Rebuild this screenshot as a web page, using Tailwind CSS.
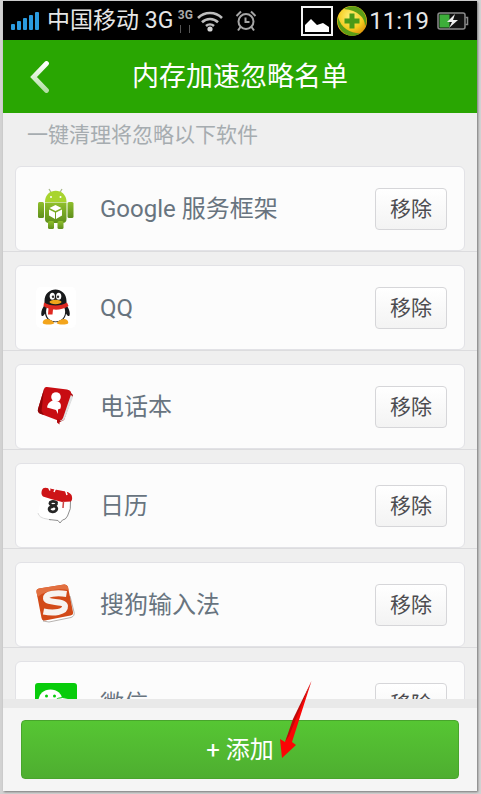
<!doctype html>
<html lang="zh-CN">
<head>
	<title>内存加速忽略名单</title>
	<meta charset="UTF-8">
	<meta content="width=device-width, initial-scale=1.0" name="viewport">
	<script src="https://cdn.jsdelivr.net/npm/@tailwindcss/browser@4"></script>
</head>

<body class="bg-[#d2d2d2] font-[Roboto,'Noto_Sans_CJK_SC',sans-serif]">

<div class="h-screen pt-px pb-[3px] pl-[3px] pr-1">
	<div class="relative flex h-full flex-col bg-[#efefef] shadow-[1px_1px_2px_#777]">

		<!-- Status bar -->
		<div class="flex h-[39px] shrink-0 items-center bg-black pl-2 pr-2 text-2xl text-[#e6e6e6]">
			<svg class="mr-2 h-5 w-7" viewBox="0 0 28 20" fill="#2b9be0">
				<rect x="0" y="13" width="4" height="6" rx="1"/>
				<rect x="6" y="10" width="4" height="9" rx="1"/>
				<rect x="12" y="7" width="4" height="12" rx="1"/>
				<rect x="18" y="4" width="4" height="15" rx="1"/>
				<rect x="24" y="1" width="4" height="18" rx="1"/>
			</svg>
			<span class="whitespace-nowrap text-[23px] leading-8">中国移动 3G</span>
			<div class="ml-1 flex w-4 flex-col items-center">
				<span class="text-xs font-bold leading-3 text-[#aaa]">3G</span>
				<div class="mt-1 flex gap-2">
					<span class="h-2 w-px bg-[#555]"></span>
					<span class="h-2 w-px bg-[#555]"></span>
				</div>
			</div>
			<svg class="ml-1 h-[22px] w-[26px]" viewBox="0 0 26 22" fill="none" stroke="#bdbdbd" stroke-width="2.6">
				<path d="M1 8a17 17 0 0 1 24 0M5 12.200a11.500 11.500 0 0 1 16 0M9 16a6 6 0 0 1 8 0"/>
				<circle cx="13" cy="19" r="2.600" fill="#d5d5d5" stroke="none"/>
			</svg>
			<svg class="ml-3 h-[22px] w-[22px]" viewBox="0 0 22 22" fill="none" stroke="#a5a5a5" stroke-width="2">
				<circle cx="11" cy="11.500" r="7.500"/>
				<path d="M10.500 7.500v4.500h4M1.500 6 6 1.500M20.500 6 16 1.500M5.500 17 3 20.500M16.500 17l2.500 3.500"/>
			</svg>
			<div class="ml-auto flex items-center">
				<svg class="h-[30px] w-8" viewBox="0 0 32 30">
					<rect x="1" y="1" width="30" height="28" fill="none" stroke="#f2f2f2" stroke-width="2"/>
					<path fill="#fff" d="M4 26v-7l6-6 6 6 3-1 3-1 6 4v5z"/>
				</svg>
				<svg class="ml-1 h-[30px] w-[30px]" viewBox="0 0 30 30">
					<defs>
						<radialGradient id="ball" cx=".45" cy=".35" r=".7">
							<stop offset="0" stop-color="#fff27a"/>
							<stop offset=".6" stop-color="#f5cb1e"/>
							<stop offset="1" stop-color="#d98a08"/>
						</radialGradient>
					</defs>
					<circle cx="15" cy="15" r="15" fill="url(#ball)"/>
					<path fill="#5c9d16" d="M7 3C13-1 22-1 27 7c3 5 3 10 1 13C28 12 21 4 7 3z"/>
					<path fill="#5c9d16" d="M1 11c-2 8 3 16 11 18.500 4 1 8 0 11-2C13 27 4 22 1 11z"/>
					<path fill="#4b9a17" d="M12.500 7.500h5v5h5v5h-5v5h-5v-5h-5v-5h5z"/>
				</svg>
				<span class="ml-0.5 leading-8">11:19</span>
				<svg class="ml-2 h-[18px] w-8" viewBox="0 0 32 18">
					<rect x="1" y="1" width="27" height="16" rx="2" fill="#111" stroke="#8a8a8a" stroke-width="1.500"/>
					<path d="M28.500 5.500h2v7h-2" fill="none" stroke="#8a8a8a" stroke-width="1.500"/>
					<rect x="2.500" y="2.500" width="10" height="13" fill="#3dae3a"/>
					<path fill="#eee" d="m18 2-8 8h5l-3 6 9-8h-5z"/>
				</svg>
			</div>
		</div>

		<!-- Title bar -->
		<header class="grid h-[73px] shrink-0 grid-cols-[74px_1fr_74px] items-center bg-[#29a602]">
			<button type="button" class="flex justify-center" aria-label="返回">
				<svg class="h-8 w-5" viewBox="0 0 20 32" fill="none">
					<defs>
						<linearGradient id="back" x1="0" y1="0" x2="0" y2="1">
							<stop offset="0" stop-color="#fff"/>
							<stop offset="1" stop-color="#b5dfa6"/>
						</linearGradient>
					</defs>
					<path d="M16.500 2.500 3.500 16l13 13.500" stroke="url(#back)" stroke-width="4.800" stroke-linecap="round"/>
				</svg>
			</button>
			<h1 class="text-center text-[27px] leading-8 text-white">内存加速忽略名单</h1>
		</header>

		<!-- Ignored apps -->
		<main class="min-h-0 flex-1 overflow-hidden">
			<p class="h-10 pt-1 pl-6 text-[21px] leading-9 text-[#a6acb0]">一键清理将忽略以下软件</p>
			<ul class="text-2xl text-[#68747f]">
				<li class="border-b border-[#dcdcde] px-3 pt-[13px]">
					<div class="flex h-[85px] items-center rounded-md border border-[#e2e2e6] bg-[#fcfcfc] pr-[17px] pl-[19px]">
						<svg class="h-[42px] w-[42px]" viewBox="0 0 42 42">
							<defs>
								<linearGradient id="droid" x1="0" y1="0" x2="0" y2="1">
									<stop offset="0" stop-color="#8fbf2c"/>
									<stop offset="1" stop-color="#5f8f1c"/>
								</linearGradient>
							</defs>
							<path d="m14 1 3 5M27 1l-3 5" stroke="#a9b98a" stroke-width="1.300"/>
							<path fill="#a8d42f" d="M10 14C10-1 31.500-1 31.500 14z"/>
							<circle cx="16" cy="9" r="1" fill="#fff"/>
							<circle cx="25.500" cy="9" r="1" fill="#fff"/>
							<g fill="url(#droid)">
								<path d="M10 14.500h21.500V31q0 4-4 4H14q-4 0-4-4z"/>
								<rect x="3" y="14" width="6" height="16" rx="1.500"/>
								<rect x="32.500" y="14" width="6" height="16" rx="1.500"/>
								<rect x="13" y="33" width="6" height="8" rx="1.500"/>
								<rect x="22.500" y="33" width="6" height="8" rx="1.500"/>
							</g>
							<path fill="#fff" d="m20.500 17 6 3-6 3-6-3zM14 21.500l6 3v6.500l-6-3.500zM27 21.500l-6 3v6.500l6-3.500z"/>
						</svg>
						<span class="ml-[23px] flex-1">Google 服务框架</span>
						<button type="button" class="h-[42px] w-[72px] rounded-[4px] border border-[#d6d6d9] bg-linear-to-b from-white to-[#f3f3f3] text-[21px] text-[#4c4c50]">移除</button>
					</div>
				</li>
				<li class="border-b border-[#dcdcde] px-3 pt-[13px]">
					<div class="flex h-[85px] items-center rounded-md border border-[#e2e2e6] bg-[#fcfcfc] pr-[17px] pl-[19px]">
						<svg class="h-[42px] w-[42px]" viewBox="0 0 42 42">
							<rect x="1" width="40" height="41" rx="5" fill="#fff"/>
							<path fill="#181a1c" d="M9.500 14C9.500-1.500 31.500-1.500 31.500 14v4c2 3 4 7 3 10.500-.8 1.500-2.500 0-3.500-2C30 38 11 38 10 26.500c-1 2-2.700 3.500-3.500 2-1-3.500 1-7.500 3-10.500z"/>
							<path fill="#fff" d="M12 20h17C32 26 29 34.500 20.500 34.500S9.500 26 12 20z"/>
							<path fill="#f3a51d" d="M9 33c3-2 7-.5 10.500 3-2 2-9.500 2-11.500.5-.7-.8 0-2.500 1-3.500zM32 33c-3-2-7-.5-10.500 3 2 2 9.500 2 11.500.5.700-.8 0-2.500-1-3.500z"/>
							<ellipse cx="17.300" cy="9.300" rx="2.600" ry="3.500" fill="#fff"/>
							<ellipse cx="23.700" cy="9.300" rx="2.600" ry="3.500" fill="#fff"/>
							<circle cx="18" cy="9.800" r="1.200" fill="#333"/>
							<circle cx="23" cy="9.800" r="1.200" fill="#333"/>
							<ellipse cx="20.500" cy="15" rx="6" ry="2.200" fill="#f0a51c"/>
							<path fill="#df2a22" d="M9 15.500c6 4 17 4 23 0l1.500 3.500c-5 3.500-11 4-15.500 3.500l-.5 5h-4.500l.5-6q-3-.8-5-2.500z"/>
						</svg>
						<span class="ml-[23px] flex-1">QQ</span>
						<button type="button" class="h-[42px] w-[72px] rounded-[4px] border border-[#d6d6d9] bg-linear-to-b from-white to-[#f3f3f3] text-[21px] text-[#4c4c50]">移除</button>
					</div>
				</li>
				<li class="border-b border-[#dcdcde] px-3 pt-[13px]">
					<div class="flex h-[85px] items-center rounded-md border border-[#e2e2e6] bg-[#fcfcfc] pr-[17px] pl-[19px]">
						<svg class="h-[42px] w-[42px]" viewBox="0 0 42 42">
							<path fill="#a5090c" d="m35 6 3 3-9 25-6 3-1-5z"/>
							<path fill="#dfe1e2" d="M35 8.500q3 1 2.500 4L30 32q-1 3-5 3z"/>
							<path fill="#c80d12" d="M12 1 32 3.500q5 1 4 5L28 32q-1 3-5 2.500L6 28q-4-1.500-3-5L9 3q.8-2.500 3-2z"/>
							<path fill="#8f0508" d="M9 3 3 23q-1 3.500 3 5l3 1-2.500-4z"/>
							<path fill="#b30a0e" d="M22 33h2.500v5.500l-2.500-2z"/>
							<circle cx="21" cy="11" r="4.800" fill="#fff"/>
							<path fill="#fff" d="m17.500 14.500 5.500 1q4 1.500 2.500 7l-2.500 1v4.500l-2-4-9-2.500q.5-5 5.500-7z"/>
						</svg>
						<span class="ml-[23px] flex-1">电话本</span>
						<button type="button" class="h-[42px] w-[72px] rounded-[4px] border border-[#d6d6d9] bg-linear-to-b from-white to-[#f3f3f3] text-[21px] text-[#4c4c50]">移除</button>
					</div>
				</li>
				<li class="border-b border-[#dcdcde] px-3 pt-[13px]">
					<div class="flex h-[85px] items-center rounded-md border border-[#e2e2e6] bg-[#fcfcfc] pr-[17px] pl-[19px]">
						<svg class="h-[42px] w-[42px]" viewBox="0 0 42 42">
							<path fill="#fff" d="m7 9 28 5-2 16q-1 5-5 5l-3 3-3-2-14-3q-5-1-5-5z"/>
							<path fill="none" stroke="#dcdcdc" d="M3 28q1 5 9 6l4 1"/>
							<path fill="none" stroke="#8e8e8e" d="M35.500 16q1 8-3 15-2 4-5 4l-2.500 3-2-2.500-9-1"/>
							<path fill="#cd1417" d="M7 5q1-3 5-2l16 3q6 .5 8.500 4 1.500 4-.5 6.500L27 17 16 14 8 11.500Q5.500 9 7 5z"/>
							<path stroke="#fff" stroke-width="1.500" d="m13.500 2 1.500 3.500M20.500 3.500 19 7M30.500 5l1.500 5"/>
							<path stroke="#c44" stroke-width="1.500" d="m28.500 16-.5 7"/>
							<g fill="none" stroke="#262626" stroke-width="2.800" stroke-linecap="round">
								<path d="M21.500 17.500C18 15.500 14.500 16.500 15 18.800c.5 2.200 4 1.500 6 3.200 2 2.500-.5 5-3.500 4.800-4-.3-4.500-4-1-5 2-.6 4.500-1 5-2.800"/>
							</g>
						</svg>
						<span class="ml-[23px] flex-1">日历</span>
						<button type="button" class="h-[42px] w-[72px] rounded-[4px] border border-[#d6d6d9] bg-linear-to-b from-white to-[#f3f3f3] text-[21px] text-[#4c4c50]">移除</button>
					</div>
				</li>
				<li class="border-b border-[#dcdcde] px-3 pt-[13px]">
					<div class="flex h-[85px] items-center rounded-md border border-[#e2e2e6] bg-[#fcfcfc] pr-[17px] pl-[19px]">
						<svg class="h-[42px] w-[42px]" viewBox="0 0 42 42">
							<path fill="#fff" stroke="#a5a09c" stroke-width=".8" d="m35 12 4 16q1 4-3 5.500L14 38l-6-1z"/>
							<path fill="#d24a18" d="m4 4.500 25-4q3-.5 4 2.500l5 25q.5 3-2.500 3.500L10 36.500q-3 .5-3.500-2.500L1.500 8q-.5-3 2.500-3.500z"/>
							<path fill="#e27040" d="m4 4.500 25-4q3-.5 4 2.500l.5 3Q16 3 2.500 13l-1-5q-.5-3 2.500-3.500z"/>
							<path fill="none" stroke="#f7f3f0" stroke-width="6" d="M31.500 10C22 8.500 10.500 9.500 11 14.500c.5 5 18.500 2 19 7.500.5 6.500-11.500 7.500-21.500 5.500"/>
						</svg>
						<span class="ml-[23px] flex-1">搜狗输入法</span>
						<button type="button" class="h-[42px] w-[72px] rounded-[4px] border border-[#d6d6d9] bg-linear-to-b from-white to-[#f3f3f3] text-[21px] text-[#4c4c50]">移除</button>
					</div>
				</li>
				<li class="border-b border-[#dcdcde] px-3 pt-[13px]">
					<div class="flex h-[85px] items-center rounded-md border border-[#e2e2e6] bg-[#fcfcfc] pr-[17px] pl-[19px]">
						<svg class="h-[42px] w-[42px]" viewBox="0 0 42 42">
							<rect width="42" height="42" rx="3" fill="#08cc0b"/>
							<ellipse cx="15.500" cy="17" rx="12" ry="10.500" fill="#fff"/>
							<circle cx="11.500" cy="13" r="1.500" fill="#08cc0b"/>
							<circle cx="19.500" cy="13" r="1.500" fill="#08cc0b"/>
							<ellipse cx="27.500" cy="24" rx="10.500" ry="9.500" fill="#fff" stroke="#08cc0b"/>
							<circle cx="24.500" cy="22" r="1.200" fill="#08cc0b"/>
							<circle cx="31.500" cy="22" r="1.200" fill="#08cc0b"/>
						</svg>
						<span class="ml-[23px] flex-1">微信</span>
						<button type="button" class="h-[42px] w-[72px] rounded-[4px] border border-[#d6d6d9] bg-linear-to-b from-white to-[#f3f3f3] text-[21px] text-[#4c4c50]">移除</button>
					</div>
				</li>
			</ul>
		</main>

		<!-- Add button -->
		<footer class="shrink-0 border-t-[9px] border-[#e9e9e9] bg-[#f5f5f5] px-[18px] py-3">
			<button type="button" class="h-[59px] w-full rounded-[4px] border border-[#48a52c] bg-linear-to-b from-[#56c633] to-[#4eae30] text-2xl text-white">+ 添加</button>
		</footer>

		<!-- Pointer over the add button -->
		<svg class="absolute right-[165px] bottom-[32px] h-[78px] w-8" viewBox="0 0 32 78">
			<path fill="#fb0505" d="M31.500 0 12 61l4 3L2 77 0 58l5 3z"/>
			<path fill="#c00808" d="M31.500 0 13 38 5 61l4-6z"/>
		</svg>
	</div>
</div>

</body>
</html>
